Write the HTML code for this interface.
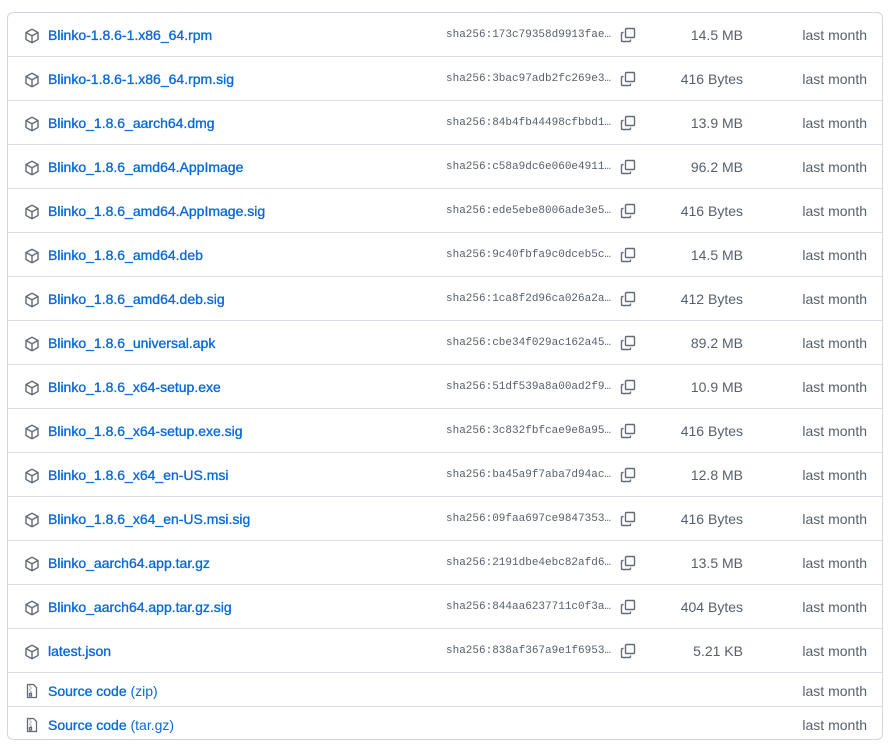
<!DOCTYPE html>
<html><head><meta charset="utf-8"><style>
body{margin:0;background:#fff;font-family:"Liberation Sans",sans-serif;}
.box{position:absolute;left:7px;top:12px;width:876px;height:728px;border:1px solid #d0d7de;border-radius:6px;box-sizing:border-box;overflow:hidden}
.row{position:relative;height:44px;border-bottom:1px solid #d8dee4;box-sizing:border-box}
.row.s{height:34px}
.row:last-child{border-bottom:none}
.ic{position:absolute;left:16px;top:15px}
.s .ic{top:10px}
.n{position:absolute;left:40px;top:14px;font-size:14px;font-weight:normal;-webkit-text-stroke:0.35px #0969da;color:#0969da;white-space:nowrap}
.s .n{top:10px}
.n span{-webkit-text-stroke:0}
.h{position:absolute;left:438px;top:16px;font-family:"Liberation Mono",monospace;font-size:11px;color:#57606a}
.cp{position:absolute;left:612px;top:14px}
.sz{position:absolute;right:139px;top:14px;font-size:14px;color:#57606a}
.t{position:absolute;right:15px;top:14px;font-size:14px;color:#57606a}
.s .t{top:10px}
</style></head><body><div class="box">
<script>
const rows=[["Blinko-1.8.6-1.x86_64.rpm","173c79358d9913fae","14.5 MB"],["Blinko-1.8.6-1.x86_64.rpm.sig","3bac97adb2fc269e3","416 Bytes"],["Blinko_1.8.6_aarch64.dmg","84b4fb44498cfbbd1","13.9 MB"],["Blinko_1.8.6_amd64.AppImage","c58a9dc6e060e4911","96.2 MB"],["Blinko_1.8.6_amd64.AppImage.sig","ede5ebe8006ade3e5","416 Bytes"],["Blinko_1.8.6_amd64.deb","9c40fbfa9c0dceb5c","14.5 MB"],["Blinko_1.8.6_amd64.deb.sig","1ca8f2d96ca026a2a","412 Bytes"],["Blinko_1.8.6_universal.apk","cbe34f029ac162a45","89.2 MB"],["Blinko_1.8.6_x64-setup.exe","51df539a8a00ad2f9","10.9 MB"],["Blinko_1.8.6_x64-setup.exe.sig","3c832fbfcae9e8a95","416 Bytes"],["Blinko_1.8.6_x64_en-US.msi","ba45a9f7aba7d94ac","12.8 MB"],["Blinko_1.8.6_x64_en-US.msi.sig","09faa697ce9847353","416 Bytes"],["Blinko_aarch64.app.tar.gz","2191dbe4ebc82afd6","13.5 MB"],["Blinko_aarch64.app.tar.gz.sig","844aa6237711c0f3a","404 Bytes"],["latest.json","838af367a9e1f6953","5.21 KB"]];
const pkg='<svg class="ic" width="16" height="16" viewBox="0 0 16 16" fill="none" stroke="#636c76" stroke-width="1.4" stroke-linejoin="round"><path d="M8 1.3l6 3.2v7L8 14.7 2 11.5v-7z"/><path d="M2 4.5l6 3.3 6-3.3M8 7.8v6.9"/></svg>';
const cp='<svg class="cp" width="16" height="16" viewBox="0 0 16 16" fill="none" stroke="#636c76" stroke-width="1.4"><rect x="5.5" y="1.5" width="9" height="9" rx="1"/><path d="M3.5 5.5h-1a1 1 0 0 0-1 1v7a1 1 0 0 0 1 1h7a1 1 0 0 0 1-1v-1"/></svg>';
const zip='<svg class="ic" width="16" height="16" viewBox="0 0 16 16" fill="none" stroke="#636c76" stroke-width="1.3"><path d="M3.5 1.5h6l3 3v10h-9z"/><path d="M6 2.5v1M7 4.5v1M6 6.5v1M7 8.5v1"/><rect x="5.5" y="10.5" width="2" height="2.5"/></svg>';
let h='';
for(const r of rows)h+=`<div class="row">${pkg}<div class="n">${r[0]}</div><div class="h">sha256:${r[1]}…</div>${cp}<div class="sz">${r[2]}</div><div class="t">last month</div></div>`;
for(const z of["zip","tar.gz"])h+=`<div class="row s">${zip}<div class="n">Source code <span>(${z})</span></div><div class="t">last month</div></div>`;
document.write(h);
</script>
</div></body></html>
